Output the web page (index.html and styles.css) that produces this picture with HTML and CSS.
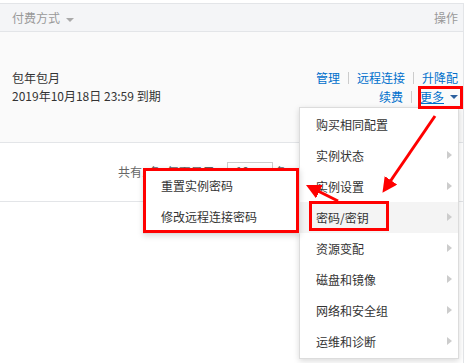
FILE: index.html
```html
<!DOCTYPE html>
<html lang="zh-CN">
<head>
    <meta charset="UTF-8">
    <meta name="viewport" content="width=device-width, initial-scale=1.0">
    <title>实例列表 - 更多操作</title>
    <link rel="stylesheet" href="styles.css">
</head>
<body>

    <div class="table">
        <div class="thead">
            <span class="th">付费方式 <i class="caret"></i></span>
            <span class="th">操作</span>
        </div>
        <div class="row">
            <div class="pay">
                <div>包年包月</div>
                <div>2019年10月18日 23:59 到期</div>
            </div>
            <div class="ops">
                <div class="ops-line">
                    <a href="#">管理</a><span class="sep"></span><a href="#">远程连接</a><span class="sep"></span><a href="#">升降配</a>
                </div>
                <div class="ops-line">
                    <a href="#">续费</a><span class="sep"></span><a href="#" class="more">更多</a><i class="caret dark"></i>
                </div>
            </div>
        </div>
        <div class="pager">
            共有1条, 每页显示<span class="size">10</span>条
        </div>
    </div>

    <ul class="menu">
        <li class="menu-item">购买相同配置</li>
        <li class="menu-item sub">实例状态</li>
        <li class="menu-item sub">实例设置</li>
        <li class="menu-item sub hover">密码/密钥</li>
        <li class="menu-item sub">资源变配</li>
        <li class="menu-item sub">磁盘和镜像</li>
        <li class="menu-item sub">网络和安全组</li>
        <li class="menu-item sub">运维和诊断</li>
    </ul>

    <ul class="submenu">
        <li class="submenu-item">重置实例密码</li>
        <li class="submenu-item">修改远程连接密码</li>
    </ul>

    <!-- screenshot annotations -->
    <svg class="marks" width="470" height="363" viewBox="0 0 470 363">
        <defs>
            <marker id="head" markerWidth="5" markerHeight="5" refX="3.5" refY="2.5" orient="auto">
                <path d="M0,0 L5,2.5 L0,5 Z" fill="#f00"/>
            </marker>
        </defs>
        <rect x="419.5" y="87.5" width="42" height="20" fill="none" stroke="#f00" stroke-width="3"/>
        <rect x="310.5" y="202.5" width="77" height="27" fill="none" stroke="#f00" stroke-width="3"/>
        <rect x="144.5" y="169.5" width="153" height="62" fill="none" stroke="#f00" stroke-width="3"/>
        <line x1="435" y1="116" x2="385" y2="189" stroke="#f00" stroke-width="3" marker-end="url(#head)"/>
        <line x1="338" y1="201" x2="310" y2="187" stroke="#f00" stroke-width="3" marker-end="url(#head)"/>
    </svg>

</body>
</html>
```

FILE: styles.css
```css
body {
    margin: 0;
    font-family: "Noto Sans CJK SC", "Liberation Sans", sans-serif;
    font-size: 12px;
    color: #333;
    background: #fff;
}
.table {
    width: 463px;
    height: 360px;
    margin-top: 3px;
    border-top: 1px solid #e3e5e8;
    border-right: 1px solid #e3e5e8;
}
.thead {
    display: flex;
    justify-content: space-between;
    align-items: center;
    height: 27px;
    padding: 0 5px 0 12px;
    background: #f4f5f7;
    border-bottom: 1px solid #e3e5e8;
    color: #999;
}
.caret {
    display: inline-block;
    width: 0;
    height: 0;
    margin-left: 3px;
    vertical-align: middle;
    border-left: 4px solid transparent;
    border-right: 4px solid transparent;
    border-top: 4px solid #aaa;
}
.caret.dark {
    border-top-color: #2b5f9e;
    margin-left: 6px;
}
.row {
    display: flex;
    justify-content: space-between;
    align-items: center;
    height: 110px;
    padding: 0 5px 0 12px;
    background: #fafafa;
    border-bottom: 1px solid #e3e5e8;
}
.pay {
    line-height: 18px;
}
.ops {
    display: flex;
    flex-direction: column;
    align-items: flex-end;
    line-height: 19px;
}
.ops-line {
    display: flex;
    align-items: center;
}
.ops a {
    color: #0070cc;
    text-decoration: none;
}
.ops a.more {
    text-decoration: underline;
}
.sep {
    display: inline-block;
    width: 1px;
    height: 12px;
    margin: 0 8px;
    background: #ccc;
}
.pager {
    display: flex;
    align-items: center;
    height: 56px;
    padding-left: 118px;
    padding-bottom: 2px;
    border-bottom: 1px solid #e3e5e8;
    color: #666;
}
.size {
    display: inline-block;
    width: 36px;
    height: 16px;
    line-height: 16px;
    margin: 0 2px 0 12px;
    padding-left: 8px;
    border: 1px solid #ccc;
    background: #fff;
}
.menu,
.submenu {
    position: absolute;
    margin: 0;
    padding: 0;
    list-style: none;
    background: #fff;
    border: 1px solid #dcdcdc;
    box-shadow: 0 2px 6px rgba(0, 0, 0, 0.15);
}
.menu {
    left: 299px;
    top: 107px;
    width: 158px;
    padding: 1px 0;
}
.menu-item {
    position: relative;
    height: 31px;
    line-height: 31px;
    padding-left: 16px;
}
.menu-item.hover {
    background: #f4f4f4;
}
.menu-item.sub::after {
    content: "";
    position: absolute;
    right: 6px;
    top: 11px;
    border-top: 4px solid transparent;
    border-bottom: 4px solid transparent;
    border-left: 5px solid #ccc;
}
.submenu {
    left: 143px;
    top: 168px;
    width: 155px;
    padding: 1px 0;
}
.submenu-item {
    height: 31px;
    line-height: 31px;
    padding-left: 17px;
}
.marks {
    position: absolute;
    left: 0;
    top: 0;
    pointer-events: none;
}
```
